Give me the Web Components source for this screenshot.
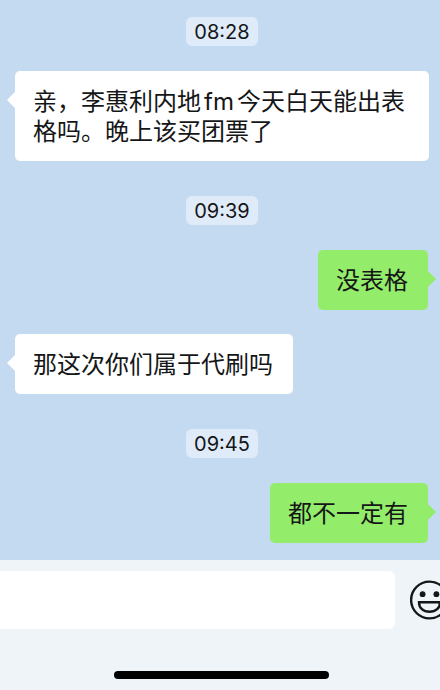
<!DOCTYPE html>
<html lang="zh-CN">
<head>
<meta charset="utf-8">
<meta name="viewport" content="width=device-width, initial-scale=1">
<title>聊天</title>
<style>
  html, body { height: 100%; margin: 0; }
  body {
    background: #eef4f7;
    color: #151617;
    font-family: Inter, "Noto Sans CJK SC", sans-serif;
  }
</style>
</head>
<body>
<chat-screen>
  <chat-time>08:28</chat-time>
  <chat-bubble side="in">亲，李惠利内地fm今天白天能出表格吗。晚上该买团票了</chat-bubble>
  <chat-time>09:39</chat-time>
  <chat-bubble side="out">没表格</chat-bubble>
  <chat-bubble side="in">那这次你们属于代刷吗</chat-bubble>
  <chat-time>09:45</chat-time>
  <chat-bubble side="out">都不一定有</chat-bubble>
  <chat-composer slot="footer"></chat-composer>
</chat-screen>

<script>
class ChatScreen extends HTMLElement {
  constructor() {
    super();
    this.attachShadow({ mode: 'open' }).innerHTML = `
      <style>
        :host { display: flex; flex-direction: column; min-height: 100%; overflow: hidden; }
        main {
          flex: 1; display: flex; flex-direction: column; gap: 24px;
          box-sizing: border-box; padding: 17px 11px 17px 15px;
          background: #c3daf0;
        }
      </style>
      <main><slot></slot></main>
      <slot name="footer"></slot>`;
  }
}

class ChatTime extends HTMLElement {
  constructor() {
    super();
    this.attachShadow({ mode: 'open' }).innerHTML = `
      <style>
        :host { display: flex; justify-content: center; margin: 11px 0 1px; }
        :host(:first-child) { margin-top: 0; }
        time {
          padding: 1px 8px 0; border-radius: 6px; background: #dfebf9;
          font-size: 20px; line-height: 28px;
        }
      </style>
      <time><slot></slot></time>`;
  }
}

class ChatBubble extends HTMLElement {
  constructor() {
    super();
    this.attachShadow({ mode: 'open' }).innerHTML = `
      <style>
        :host { display: flex; --fill: #fff; }
        :host([side="out"]) { --fill: #94ed6a; justify-content: flex-end; padding-right: 1px; }
        p {
          position: relative; margin: 0; padding: 16px 20px 14px 18px;
          border-radius: 5px; background: var(--fill);
          font-size: 24px; line-height: 30px; text-autospace: normal;
        }
        p::before {
          content: ""; position: absolute; top: 21px; right: 100%;
          width: 8px; height: 16px; background: var(--fill);
          clip-path: polygon(100% 0, 0 50%, 100% 100%);
        }
        :host([side="out"]) p::before {
          right: auto; left: 100%;
          clip-path: polygon(0 0, 100% 50%, 0 100%);
        }
      </style>
      <p><slot></slot></p>`;
  }
}

class ChatComposer extends HTMLElement {
  constructor() {
    super();
    this.attachShadow({ mode: 'open' }).innerHTML = `
      <style>
        :host { display: block; background: #eef4f7; padding: 11px 0; overflow: hidden; }
        .row { display: flex; align-items: center; gap: 15px; margin-right: -10px; }
        input {
          flex: 1; min-width: 0; height: 58px; box-sizing: border-box;
          margin: 0; padding: 0 18px; border: 0; border-radius: 0 6px 6px 0;
          background: #fff; color: inherit; font: inherit; font-size: 24px; outline: 0;
        }
        button { flex: none; padding: 0; border: 0; background: none; color: #151617; }
        svg { display: block; width: 40px; height: 40px; }
        .bar { padding-left: 3px; }
        .home {
          width: 49%; height: 8px; margin: 42px auto 0; border-radius: 4px; background: #000;
        }
      </style>
      <div class="row">
        <input type="text" aria-label="消息">
        <button type="button" aria-label="表情">
          <svg viewBox="0 0 40 40" fill="none" stroke="currentColor" stroke-width="2.4">
            <circle cx="19.5" cy="20" r="18.4"/>
            <circle cx="12.6" cy="14.2" r="2.9" fill="currentColor" stroke="none"/>
            <circle cx="26.400" cy="14.2" r="2.9" fill="currentColor" stroke="none"/>
            <path d="M9 22.200H30C30 28 25.800 31.800 19.500 31.800S9 28 9 22.200Z"/>
          </svg>
        </button>
      </div>
      <div class="bar"><div class="home"></div></div>`;
  }
}

customElements.define('chat-screen', ChatScreen);
customElements.define('chat-time', ChatTime);
customElements.define('chat-bubble', ChatBubble);
customElements.define('chat-composer', ChatComposer);
</script>
</body>
</html>
